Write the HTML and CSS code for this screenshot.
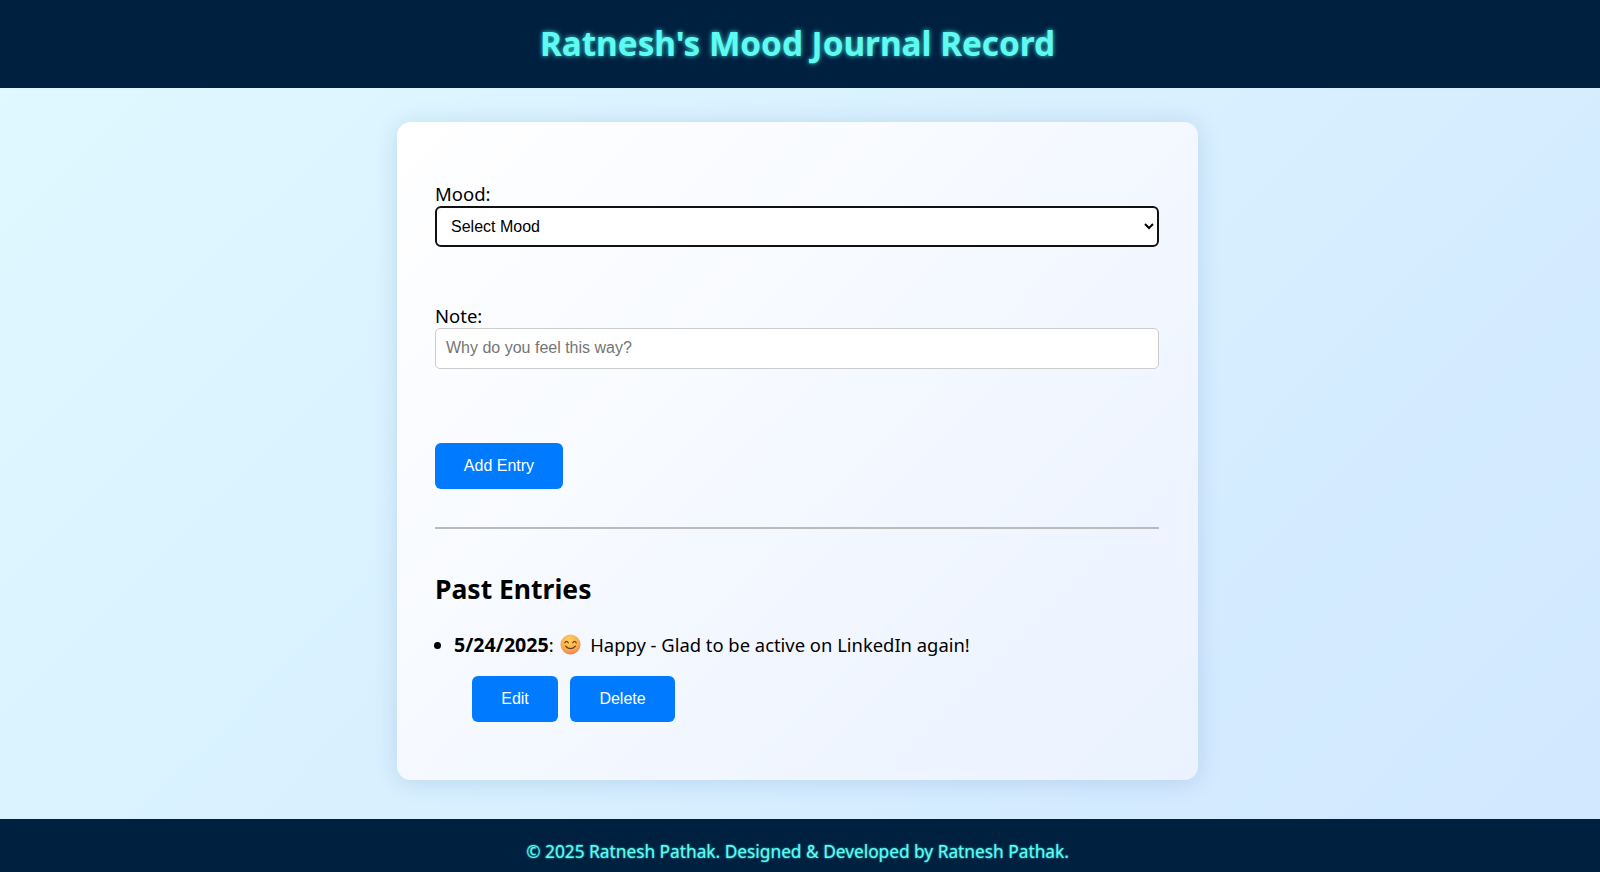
FILE: index.html
```html
<!DOCTYPE html>
<html lang="en">
<head>
<meta charset="utf-8">
<title>Ratnesh's Mood Journal Record</title>
<link rel="stylesheet" href="styles.css">
</head>
<body>
<header class="site-header"><h1>Ratnesh's Mood Journal Record</h1></header>
<main class="page">
  <section class="card">
    <form class="entry-form">
      <div class="field field-mood">
        <label for="mood">Mood:</label>
        <select id="mood" class="mood-select"><option>Select Mood</option></select>
      </div>
      <div class="field field-note">
        <label for="note">Note:</label>
        <input id="note" class="note-input" type="text" placeholder="Why do you feel this way?">
      </div>
      <button type="button" class="btn btn-add">Add Entry</button>
    </form>
    <hr class="divider">
    <h2>Past Entries</h2>
    <ul class="entries">
      <li>
        <div class="entry-text"><strong>5/24/2025</strong>: <svg class="emoji" viewBox="0 0 24 24" aria-hidden="true"><defs><radialGradient id="face" cx="0.45" cy="0.3" r="0.8"><stop offset="0" stop-color="#ffd45a"/><stop offset="0.6" stop-color="#f9a94f"/><stop offset="1" stop-color="#e8705a"/></radialGradient></defs><circle cx="12" cy="12" r="11.5" fill="url(#face)"/><path d="M5.5 10q2-3 4 0M14.5 10q2-3 4 0" fill="none" stroke="#6b3a1e" stroke-width="1.4" stroke-linecap="round"/><path d="M6.5 14q5.500 5.500 11 0" fill="none" stroke="#6b3a1e" stroke-width="1.4" stroke-linecap="round"/></svg> Happy - Glad to be active on LinkedIn again!</div>
        <div class="entry-actions">
          <button type="button" class="btn btn-edit">Edit</button>
          <button type="button" class="btn btn-delete">Delete</button>
        </div>
      </li>
    </ul>
  </section>
</main>
<footer class="site-footer">© 2025 Ratnesh Pathak. Designed &amp; Developed by Ratnesh Pathak.</footer>
</body>
</html>
```
FILE: styles.css
```css
* { box-sizing: border-box; }
html, body { height: 100%; }
body {
  margin: 0;
  height: 872px;
  overflow: hidden;
  display: flex;
  flex-direction: column;
  font-family: "Noto Sans", "Open Sans", sans-serif;
  color: #000;
  background: linear-gradient(135deg, #e0f9ff 0%, #d0e7ff 100%);
}
.site-header {
  height: 88px;
  flex: none;
  display: flex;
  align-items: center;
  justify-content: center;
  padding: 0 5px 2px 0;
  background: #002040;
}
.site-header h1 {
  margin: 0;
  font-size: 33.3px;
  font-weight: 700;
  color: #5ffbf1;
  text-shadow: 0 0 5px #3fe0d8;
}
.page {
  flex: 1;
  display: flex;
  justify-content: center;
  align-items: flex-start;
  padding: 34px 5px 0 0;
}
.card {
  width: 801px;
  height: 658px;
  padding: 62px 39px 0 38px;
  border-radius: 14px;
  background: linear-gradient(135deg, #ffffff 0%, #eaf2ff 100%);
  box-shadow: 0 2px 24px rgba(0, 60, 120, 0.14);
}
.field label {
  display: block;
  font-size: 18.5px;
  line-height: 20px;
  margin-bottom: 2px;
}
.field-mood { height: 122px; }
.field-note { height: 118px; }
.mood-select {
  display: block;
  width: 100%;
  height: 41px;
  padding: 0 10px 1px;
  font-family: "Liberation Sans", Arial, sans-serif;
  font-size: 16px;
  color: #000;
  background: #fff;
  border: 2px solid #111;
  border-radius: 6px;
}
.note-input {
  display: block;
  width: 100%;
  height: 41px;
  padding: 0 10px 2px;
  font-family: "Liberation Sans", Arial, sans-serif;
  font-size: 16px;
  background: #fff;
  border: 1px solid #ccc;
  border-radius: 5px;
}
.note-input::placeholder { color: #757575; }
.btn {
  height: 46px;
  padding: 0;
  border: 0;
  border-radius: 6px;
  background: #007bff;
  color: #fff;
  font-family: "Liberation Sans", Arial, sans-serif;
  font-size: 16px;
}
.btn-add { width: 128px; margin-top: 19px; display: block; }
.btn-edit { width: 86px; }
.btn-delete { width: 105px; }
.divider {
  margin: 38px 0 0;
  border: 0;
  border-top: 2px solid #bbb;
}
h2 {
  margin: 41px 0 0;
  font-size: 26.5px;
  line-height: 38px;
  font-weight: 700;
}
.entries {
  margin: 24px 0 0;
  padding: 0 0 0 19px;
}
.entries li { font-size: 18.4px; }
.entries strong { font-size: 19.6px; }
.entry-text { line-height: 26px; }
.emoji {
  width: 21px;
  height: 21px;
  vertical-align: -3px;
  margin: 0 4px 0 2px;
}
.entry-actions {
  display: flex;
  gap: 12px;
  margin: 18px 0 0 18px;
}
.site-footer {
  height: 53px;
  flex: none;
  display: flex;
  align-items: center;
  justify-content: center;
  padding: 11px 5px 0 0;
  background: #002040;
  color: #5ffbf1;
  font-size: 17.3px;
  text-shadow: 0 0 2px #3fe0d8;
}
```
